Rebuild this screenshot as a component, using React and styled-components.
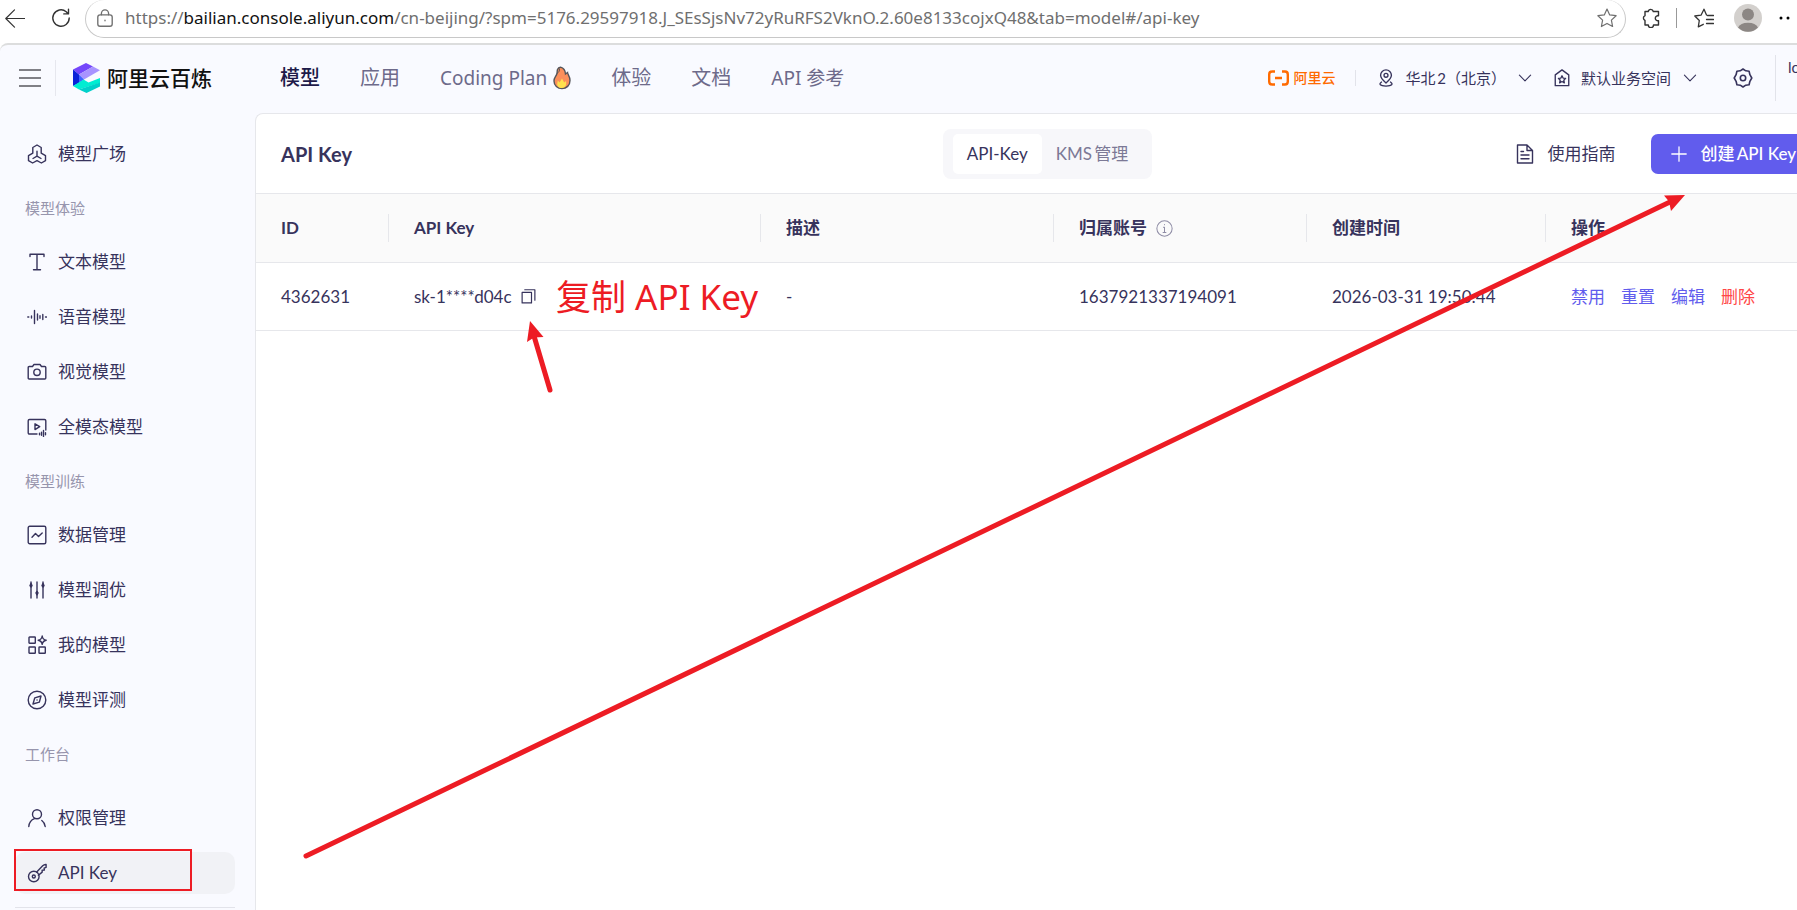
import { useState } from 'react';
import styled, { createGlobalStyle } from 'styled-components';

const GlobalStyle = createGlobalStyle`
	* {
		box-sizing: border-box;
	}
	body {
		margin: 0;
		background: #fff;
		color: #37335c;
		font: 17px/24px Lato, 'Noto Sans CJK SC', sans-serif;
		text-autospace: normal;
		overflow: hidden;
	}
	button, input {
		font: inherit;
		color: inherit;
		border: 0;
		padding: 0;
		background: none;
	}
	button {
		cursor: pointer;
	}
	a {
		color: inherit;
		text-decoration: none;
	}
`;

const Screen = styled.div`
	height: 100vh;
	display: flex;
	flex-direction: column;
	overflow: hidden;
	position: relative;
`;

const BrowserBar = styled.div`
	height: 43px;
	flex: none;
	display: flex;
	align-items: flex-start;
	background: #fff;
	color: #333;
`;

const BarButton = styled.button`
	height: 36px;
	width: ${props => props.$width || 50}px;
	flex: none;
	display: grid;
	place-items: center;
`;

const BackButton = styled(BarButton)`
	margin-right: 10px;
	width: 30px;
`;

const ReloadButton = styled(BarButton)`
	margin-right: 3px;
	width: 42px;
`;

const AddressBar = styled.div`
	flex: 1;
	height: 38px;
	display: flex;
	align-items: center;
	padding: 0 8px 2px 10px;
	border: 1px solid #c8c8c8;
	border-top: 0;
	border-radius: 19px;
	color: #6f6f6f;
`;

const Url = styled.a`
	flex: 1;
	margin-left: 11px;
	font: 17px/24px 'Noto Sans', sans-serif;
	white-space: nowrap;
	b {
		color: #111;
		font-weight: 400;
	}
`;

const BarDivider = styled.i`
	width: 1px;
	height: 20px;
	margin-top: 8px;
	background: #999;
`;

// the console is wider than the window, its right edge is cut off
const Console = styled.div`
	flex: 1;
	min-height: 0;
	width: calc(100% + 42px);
	display: flex;
	flex-direction: column;
	background: #f9faff;
	border-top: 2px solid #dcdddd;
	border-top-left-radius: 8px;
`;

const Header = styled.header`
	height: 68px;
	flex: none;
	display: flex;
	align-items: center;
	padding: 0 16px 2px 12px;
`;

const MenuButton = styled.button`
	width: 44px;
	height: 36px;
	display: flex;
	align-items: center;
	padding-left: 7px;
	border-right: 1px solid #e6e7ee;
`;

const Brand = styled.a`
	display: flex;
	align-items: center;
	gap: 7px;
	width: 224px;
	padding-left: 17px;
	color: #111;
	font-size: 21px;
	font-weight: 500;
`;

const Nav = styled.nav`
	display: flex;
	align-items: center;
	gap: 40px;
	font: 20px/28px 'Noto Sans', 'Noto Sans CJK SC', sans-serif;
`;

const NavLink = styled.a`
	display: flex;
	align-items: center;
	gap: 6px;
	color: ${props => (props.$active ? '#1e1a49' : '#6d6a8a')};
	font-weight: ${props => (props.$active ? 500 : 400)};
	font-size: ${props => (props.$latin ? 19 : 20)}px;
`;

const HeaderTools = styled.div`
	flex: 1;
	display: flex;
	align-items: center;
	justify-content: flex-end;
	font-size: 15px;
`;

const CloudLink = styled.a`
	display: flex;
	align-items: center;
	gap: 4px;
	padding-right: 20px;
	border-right: 1px solid #e2e3ea;
	line-height: 16px;
	font-size: 14px;
	font-weight: 500;
	color: #ff6a00;
`;

const Picker = styled.button`
	display: flex;
	align-items: center;
	gap: 10px;
	margin-left: 21px;
	span {
		margin-right: 2px;
	}
`;

const SettingsButton = styled.button`
	display: flex;
	margin: 0 22px 0 36px;
`;

const Account = styled.div`
	height: 46px;
	width: 48px;
	padding-left: 12px;
	border-left: 1px solid #e2e3ea;
	line-height: 24px;
`;

const Body = styled.div`
	flex: 1;
	min-height: 0;
	display: flex;
`;

const Sidebar = styled.aside`
	width: 255px;
	flex: none;
	display: flex;
	flex-direction: column;
	padding: 20px 20px 0 15px;
`;

const Group = styled.section`
	display: flex;
	flex-direction: column;
	gap: 13px;
	padding-bottom: 13px;
`;

const GroupTitle = styled.h2`
	margin: 0;
	padding-left: 10px;
	font-size: 15px;
	font-weight: 400;
	line-height: 40px;
	color: #9795ad;
`;

const PinnedGroup = styled(Group)`
	padding-top: 10px;
	border-bottom: 1px solid #e2e3ea;
`;

const SideLink = styled.a`
	height: 42px;
	display: flex;
	align-items: center;
	gap: 11px;
	padding-left: 12px;
	border-radius: 10px;
	background: ${props => (props.$active ? '#f1f2f6' : 'transparent')};
`;

const Main = styled.main`
	flex: 1;
	min-width: 0;
	background: #fff;
	border: 1px solid #e6e7eb;
	border-right: 0;
	border-bottom: 0;
	border-top-left-radius: 8px;
	overflow: hidden;
`;

const Toolbar = styled.div`
	height: 79px;
	display: grid;
	grid-template-columns: 1fr auto 1fr;
	align-items: center;
	padding: 0 25px;
`;

const Title = styled.h1`
	margin: 0;
	font-size: 20px;
	font-weight: 700;
`;

const Tabs = styled.div`
	display: flex;
	padding: 5px 10px;
	border-radius: 8px;
	background: #f7f7fa;
`;

const Tab = styled.button`
	height: 40px;
	padding: 0 14px;
	border-radius: 5px;
	background: ${props => (props.$active ? '#fff' : 'transparent')};
	color: ${props => (props.$active ? '#37335c' : '#7c7996')};
`;

const Actions = styled.div`
	display: flex;
	align-items: center;
	justify-content: flex-end;
	gap: 35px;
	white-space: nowrap;
`;

const GuideLink = styled.a`
	display: flex;
	align-items: center;
	gap: 13px;
`;

const CreateButton = styled.button`
	height: 40px;
	display: flex;
	align-items: center;
	gap: 14px;
	padding: 0 18px 0 20px;
	border-radius: 7px;
	background: #615ced;
	color: #fff;
	font-weight: 500;
`;

const KeyTable = styled.table`
	width: 100%;
	table-layout: fixed;
	border-collapse: collapse;
	border-top: 1px solid #e6e7eb;
`;

const Th = styled.th`
	width: ${props => (props.$width ? `${props.$width}px` : 'auto')};
	height: 69px;
	padding: 0;
	text-align: left;
	font-weight: 700;
	background: #fafafa;
	border-bottom: 1px solid #e6e7eb;
	div {
		height: 28px;
		display: flex;
		align-items: center;
		gap: 9px;
		padding-left: 25px;
		border-right: 1px solid #e6e7eb;
	}
	&:last-child div {
		border-right: 0;
	}
`;

const Td = styled.td`
	height: 68px;
	padding: 0 0 0 25px;
	border-bottom: 1px solid #e6e7eb;
	white-space: nowrap;
`;

const KeyCell = styled.div`
	display: flex;
	align-items: center;
	gap: 9px;
`;

const IconButton = styled.button`
	display: flex;
`;

const RowActions = styled.div`
	display: flex;
	gap: 16px;
`;

const RowAction = styled.button`
	color: ${props => (props.$danger ? '#ff4747' : '#615ced')};
`;

const Annotations = styled.div`
	position: absolute;
	top: 0;
	left: 0;
	pointer-events: none;
	svg {
		display: block;
	}
`;

const CopyNote = styled.span`
	position: absolute;
	left: 556px;
	top: 273px;
	font: 35px/48px 'Noto Sans', 'Noto Sans CJK SC', sans-serif;
	white-space: nowrap;
	color: #ed1c24;
`;

const Icon = ({ size = 20, width = 1.4, color = 'currentColor', children }) => (
	<svg
		width={size}
		height={size}
		viewBox='0 0 20 20'
		fill='none'
		stroke={color}
		strokeWidth={width}
		strokeLinecap='round'
		strokeLinejoin='round'
	>
		{children}
	</svg>
);

const icons = {
	square: (
		<>
			<path d='M5.800 9.200V3.500L10 1l4.200 2.500v5.700l4.300 2.500v5L14.400 19 10 16.600 5.600 19l-4.100-2.300v-5z' />
			<path d='M10 7.200v5M10 12.200l-4 2.300M10 12.200l4 2.300' />
		</>
	),
	text: <path d='M3 4.500V2.200h14v2.300M10 2.200v15.600M6.500 17.800h7' />,
	voice: (
		<path d='M.8 10h1M4.500 9v2M7.500 3.500v13M10.500 7v6M13 8.800v2.400M15.800 7.500v5M18.500 10h.9' />
	),
	camera: (
		<>
			<path d='M2.200 4.500h3.300l1.500-2h6l1.500 2h3.300q1 0 1 1v10.500q0 1-1 1H2.200q-1 0-1-1V5.500q0-1 1-1z' />
			<circle cx='10' cy='10.300' r='3.200' />
		</>
	),
	omni: (
		<>
			<path d='M10 17H2.500q-1.300 0-1.300-1.300V3.800q0-1.300 1.300-1.300h15q1.300 0 1.300 1.300V13' />
			<path d='M8 6.800v5.800l4.700-2.900zM12.500 16.300v1.400M14.500 15.300v3M16.500 13.500v6M18.500 15.800v2' />
		</>
	),
	data: (
		<>
			<rect x='1.200' y='1.200' width='17.600' height='17.600' rx='1.500' />
			<path d='M5 12.200l3.500-3.600 3 3L15.200 8' />
		</>
	),
	tune: (
		<>
			<path d='M4 2v16M10 2v16M16 2v16' />
			<path
				d='M3 5.500l1-2 1 2-1 1.500zM9 13l1-1.500L11 13l-1 1.800zM15 5.500l1-2 1 2-1 1.500z'
				fill='currentColor'
			/>
		</>
	),
	models: (
		<>
			<rect x='2' y='2' width='6.300' height='6.300' rx='.6' />
			<rect x='2' y='12' width='6.300' height='6.300' rx='.6' />
			<rect x='12' y='12' width='6.300' height='6.300' rx='.6' />
			<path d='M15.200 1q.5 3.600 4 4.200-3.500.6-4 4.200-.5-3.600-4-4.200 3.500-.6 4-4.200z' />
		</>
	),
	compass: (
		<>
			<circle cx='10' cy='10' r='8.800' />
			<path d='M14 6l-1.700 6.200L6 14l1.800-6.200zM10 10h.1' />
		</>
	),
	user: (
		<>
			<circle cx='10' cy='6.300' r='4.500' />
			<path d='M1.800 18.500q.5-6 5.700-7.900M14.800 12.500q2.800 2 3.400 6' />
		</>
	),
	key: (
		<>
			<circle cx='6.800' cy='13.500' r='5.300' />
			<circle cx='6.800' cy='13.500' r='1.500' />
			<path d='M9.700 9l6-6.200q1.500-1.500 3.400-1.300v2.800l-2 .9.300 1.900-2.300.2.100 1.800-3.800 3.200' />
		</>
	),
};

const groups = [
	{ items: [['square', '模型广场']] },
	{
		title: '模型体验',
		items: [
			['text', '文本模型'],
			['voice', '语音模型'],
			['camera', '视觉模型'],
			['omni', '全模态模型'],
		],
	},
	{
		title: '模型训练',
		items: [
			['data', '数据管理'],
			['tune', '模型调优'],
			['models', '我的模型'],
			['compass', '模型评测'],
		],
	},
	{ title: '工作台', items: [] },
];

const pinned = [
	['user', '权限管理'],
	['key', 'API Key'],
];

const rows = [
	{
		id: '4362631',
		key: 'sk-1****d04c',
		desc: '-',
		account: '1637921337194091',
		created: '2026-03-31 19:50:44',
	},
];

const Chevron = () => (
	<Icon size={14} width={1.6}>
		<path d='M2 6l8 8 8-8' />
	</Icon>
);

const Logo = () => (
	<svg width='27' height='32' viewBox='0 0 27 32'>
		<path d='M0 7.500L13 1l7 3.500L6 12.500z' fill='#7446fb' />
		<path d='M6 12.500l14-8 7 3.800L11 17.500z' fill='#a893ff' />
		<path d='M0 7.500l6 5v8.500l-6 3z' fill='#0a22d8' />
		<path d='M6 12.500l5 5L6 21z' fill='#3d63ff' />
		<path d='M0 24l10.500-6.500 5 3L27 16v5L6 27.500z' fill='#00edd2' />
		<path d='M6 27.500L27 20.500v4L13.500 31z' fill='#00d0ca' />
	</svg>
);

const Flame = () => (
	<svg width='18' height='24' viewBox='0 0 18 24'>
		<path
			d='M7.500 1.200c3.500 1 4.800 3.600 5 6.800l2-1.500c.1 2 2.500 3.500 2.500 8 0 5-3.500 8-8 8s-8-3-8-7.500c0-3.500 2-4.500 2.800-7 .6-2 .2-3.200.7-4.500.6-1.500 1.600-2.200 3-2.300z'
			fill='#fb8f5b'
			stroke='#55555a'
			strokeWidth='1.400'
		/>
		<path d='M3.800 7.500c2-1 3-2.800 2.600-5' fill='none' stroke='#55555a' />
		<path
			d='M9 22c-3.500 0-4.800-2-4.800-4l.6-3.500 1.800 2 2.400-4 2.200 4 1.800-1.500c.8 4-.6 7-4 7z'
			fill='#ffe14d'
		/>
	</svg>
);

const BrowserChrome = () => (
	<BrowserBar>
		<BackButton aria-label='Back'>
			<Icon width={1.200}>
				<path d='M19.500 10.500H.8M9.500 1.800L.8 10.500l8.700 8.700' />
			</Icon>
		</BackButton>
		<ReloadButton aria-label='Reload'>
			<Icon size={20} width={1.400}>
				<path d='M18.200 10a8.200 8.200 0 1 1-3-6.300l2 2M17.500 1.200v4.700h-4.700' />
			</Icon>
		</ReloadButton>
		<AddressBar>
			<Icon size={18} width={1.500}>
				<rect x='2' y='6.500' width='16' height='12.700' rx='2.500' />
				<path d='M6 6.500V5a4 4 0 0 1 8 0v1.500M10 12.500v.5' />
			</Icon>
			<Url href='#/api-key'>
				https://<b>bailian.console.aliyun.com</b>
				/cn-beijing/?spm=5176.29597918.J_SEsSjsNv72yRuRFS2VknO.2.60e8133cojxQ48&amp;tab=model#/api-key
			</Url>
			<Icon width={1.200}>
				<path d='M10 1l2.700 5.900 6.400.8-4.700 4.400 1.200 6.400-5.600-3.100-5.600 3.100 1.200-6.400L.9 7.700l6.400-.8z' />
			</Icon>
		</AddressBar>
		<BarButton aria-label='Extensions' $width={50}>
			<Icon>
				<path d='M4 3.500h3.200a2.600 2.600 0 0 1 5.100 0H17.500v4.300a2.500 2.500 0 1 0 0 4.800v4.400h-5a2.600 2.600 0 0 1-5.200 0H4v-4.500a2.600 2.600 0 0 1 0-4.800z' />
			</Icon>
		</BarButton>
		<BarDivider />
		<BarButton aria-label='Favorites' $width={54}>
			<Icon width={1.300}>
				<path d='M12.500 7L10 1.200 7 7.200.8 8l4.500 4.500-1 6.300 5-2.500M13.500 7.500h6M12.500 11.500h7M12.500 15.500h7' />
			</Icon>
		</BarButton>
		<BarButton aria-label='Profile' $width={34}>
			<svg width='28' height='28' viewBox='0 0 28 28'>
				<circle cx='14' cy='14' r='14' fill='#d3d0cd' />
				<circle cx='14' cy='10.500' r='6' fill='#8c8784' />
				<path d='M4 23.500a10.500 7 0 0 1 20 0 14 14 0 0 1-20 0z' fill='#8c8784' />
			</svg>
		</BarButton>
		<BarButton aria-label='More' $width={32}>
			<svg width='20' height='4' viewBox='0 0 20 4'>
				<circle cx='10' cy='2' r='1.500' />
				<circle cx='17' cy='2' r='1.500' />
			</svg>
		</BarButton>
	</BrowserBar>
);

const ConsoleHeader = () => (
	<Header>
		<MenuButton aria-label='Menu'>
			<svg width='22' height='20' viewBox='0 0 22 20' stroke='#808086' strokeWidth='2'>
				<path d='M0 2h22M0 10h22M0 18h22' />
			</svg>
		</MenuButton>
		<Brand href='#/'>
			<Logo />
			阿里云百炼
		</Brand>
		<Nav>
			<NavLink href='#/model' $active>模型</NavLink>
			<NavLink href='#/app'>应用</NavLink>
			<NavLink href='#/coding' $latin>
				Coding Plan <Flame />
			</NavLink>
			<NavLink href='#/try'>体验</NavLink>
			<NavLink href='#/docs'>文档</NavLink>
			<NavLink href='#/reference' $latin>API 参考</NavLink>
		</Nav>
		<HeaderTools>
			<CloudLink href='#/home'>
				<svg width='21' height='16' viewBox='0 0 21 16' fill='none' stroke='#ff6a00' strokeWidth='2.400'>
					<path d='M7 1.500H4Q1.200 1.500 1.200 4.500v7q0 3 2.800 3h3M14 1.500h3q2.800 0 2.800 3v7q0 3-2.800 3h-3M7 8h7' />
				</svg>
				阿里云
			</CloudLink>
			<Picker>
				<Icon size={18} width={1.500}>
					<path d='M10 15.500Q4 10.500 4 7a6 6 0 0 1 12 0q0 3.500-6 8.500z' />
					<circle cx='10' cy='7' r='2.200' />
					<path d='M5 14.500q-5 3.500 5 4.500 10-1 5-4.500' />
				</Icon>
				<span>华北2（北京）</span>
				<Chevron />
			</Picker>
			<Picker>
				<Icon size={18} width={1.500}>
					<path d='M2.500 18.500V6.500L10 1l7.500 5.500v12z' />
					<path d='M10 7.500l1.200 2.600 2.800.3-2 2 .6 3-2.600-1.500-2.600 1.500.6-3-2-2 2.800-.3z' />
				</Icon>
				<span>默认业务空间</span>
				<Chevron />
			</Picker>
			<SettingsButton aria-label='Settings'>
				<Icon size={20} width={1.600}>
					<path d='M10 1l2.800 1.800 3.300.5.800 3.400L18.800 10l-1.900 3.300-.8 3.400-3.300.5L10 19l-2.800-1.800-3.300-.5-.8-3.400L1.200 10l1.900-3.300.8-3.400 3.300-.5z' />
					<circle cx='10' cy='10' r='2.700' />
				</Icon>
			</SettingsButton>
			<Account>lo</Account>
		</HeaderTools>
	</Header>
);

const SideItem = ({ icon, label, active }) => (
	<SideLink href={`#/${icon}`} $active={active}>
		<Icon width={1.400}>{icons[icon]}</Icon>
		{label}
	</SideLink>
);

const App = () => {
	const [tab, setTab] = useState('API-Key');
	return (
		<Screen>
			<GlobalStyle />
			<BrowserChrome />
			<Console>
				<ConsoleHeader />
				<Body>
					<Sidebar>
						{groups.map((group, i) => (
							<Group key={i}>
								{group.title && <GroupTitle>{group.title}</GroupTitle>}
								{group.items.map(([icon, label]) => (
									<SideItem key={icon} icon={icon} label={label} />
								))}
							</Group>
						))}
						<PinnedGroup>
							{pinned.map(([icon, label]) => (
								<SideItem key={icon} icon={icon} label={label} active={icon === 'key'} />
							))}
						</PinnedGroup>
					</Sidebar>
					<Main>
						<Toolbar>
							<Title>API Key</Title>
							<Tabs>
								{['API-Key', 'KMS管理'].map(name => (
									<Tab key={name} $active={tab === name} onClick={() => setTab(name)}>
										{name}
									</Tab>
								))}
							</Tabs>
							<Actions>
								<GuideLink href='#/guide'>
									<Icon>
										<path d='M2.500 1h9.500l5.500 5.500V19h-15zM12 1v5.500h5.500M6 7.500h2.500M6 11h8M6 14.800h8' />
									</Icon>
									使用指南
								</GuideLink>
								<CreateButton>
									<Icon size={16} width={1.600}>
										<path d='M10 1v18M1 10h18' />
									</Icon>
									创建API Key
								</CreateButton>
							</Actions>
						</Toolbar>
						<KeyTable>
							<thead>
								<tr>
									<Th $width={133}><div>ID</div></Th>
									<Th $width={372}><div>API Key</div></Th>
									<Th $width={293}><div>描述</div></Th>
									<Th $width={253}>
										<div>
											归属账号
											<Icon size={17} width={1.200} color='#8f8da6'>
												<circle cx='10' cy='10' r='9' />
												<path d='M10 5.200v.3M8.700 8.500H10v6M8.300 14.600h3.400' />
											</Icon>
										</div>
									</Th>
									<Th $width={239}><div>创建时间</div></Th>
									<Th><div>操作</div></Th>
								</tr>
							</thead>
							<tbody>
								{rows.map(row => (
									<tr key={row.id}>
										<Td>{row.id}</Td>
										<Td>
											<KeyCell>
												{row.key}
												<IconButton aria-label='复制'>
													<Icon size={15} width={1.600}>
														<path d='M1.500 4.500H14v14H1.500zM5 1h13.500v14' />
													</Icon>
												</IconButton>
											</KeyCell>
										</Td>
										<Td>{row.desc}</Td>
										<Td>{row.account}</Td>
										<Td>{row.created}</Td>
										<Td>
											<RowActions>
												<RowAction>禁用</RowAction>
												<RowAction>重置</RowAction>
												<RowAction>编辑</RowAction>
												<RowAction $danger>删除</RowAction>
											</RowActions>
										</Td>
									</tr>
								))}
							</tbody>
						</KeyTable>
					</Main>
				</Body>
			</Console>
			<Annotations>
				<svg width='1797' height='910' fill='#ed1c24' stroke='none'>
					<rect x='15' y='850' width='176' height='40' fill='none' stroke='#ed1c24' strokeWidth='2' />
					<path d='M306 856L1672 201' stroke='#ed1c24' strokeWidth='5' strokeLinecap='round' />
					<path d='M1685 195l-21 .5 5 6 2 9.500z' />
					<path d='M550 390L534 336' stroke='#ed1c24' strokeWidth='5' strokeLinecap='round' />
					<path d='M530 321l-3 21 7-4.500 9.500-.5z' />
				</svg>
				<CopyNote>复制 API Key</CopyNote>
			</Annotations>
		</Screen>
	);
};

export default App;
